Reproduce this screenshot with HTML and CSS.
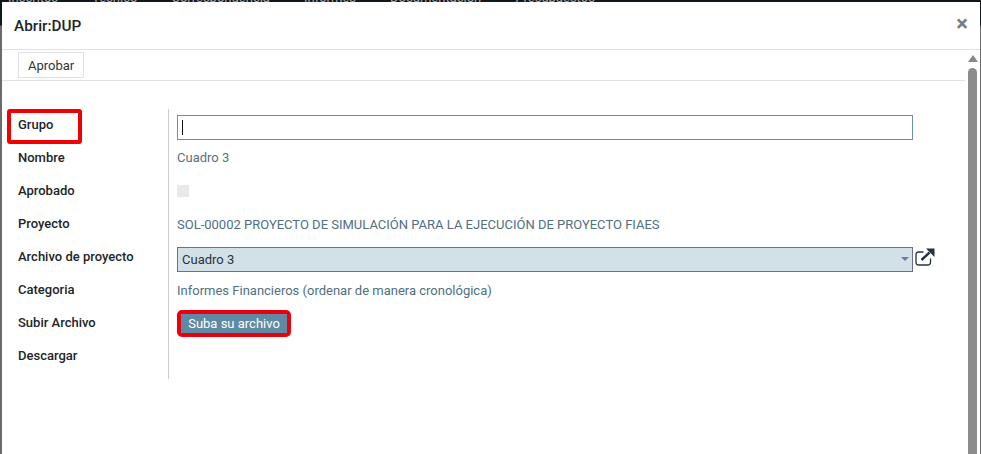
FILE: index.html
```html
<!DOCTYPE html>
<html lang="es">
<head>
<meta charset="utf-8">
<title>Abrir:DUP</title>
<link rel="stylesheet" href="styles.css">
</head>
<body>
<div class="backdrop">
  <div class="backdrop-text"><span>Inscritos</span><span>Técnico</span><span>Correspondencia</span><span>Informes</span><span>Documentación</span><span>Presupuestos</span></div>
  <div class="modal">
    <header class="modal-header">
      <h4 class="modal-title">Abrir:DUP</h4>
      <span class="close">×</span>
    </header>
    <div class="modal-main">
      <div class="modal-content">
        <div class="toolbar"><button class="btn-approve">Aprobar</button></div>
        <div class="form">
          <div class="labels">
            <div class="label label-marked">Grupo</div>
            <div class="label">Nombre</div>
            <div class="label">Aprobado</div>
            <div class="label">Proyecto</div>
            <div class="label">Archivo de proyecto</div>
            <div class="label">Categoria</div>
            <div class="label">Subir Archivo</div>
            <div class="label">Descargar</div>
          </div>
          <div class="values">
            <div class="value value-field"><div class="input"><span class="caret"></span></div></div>
            <div class="value value-text">Cuadro 3</div>
            <div class="value value-check"><span class="checkbox"></span></div>
            <div class="value link">SOL-00002 PROYECTO DE SIMULACIÓN PARA LA EJECUCIÓN DE PROYECTO FIAES</div>
            <div class="value value-field">
              <div class="select"><span>Cuadro 3</span><span class="select-arrow"></span></div>
              <svg class="external" viewBox="0 0 20 18" width="20" height="18" aria-hidden="true">
                <path d="M8.500 4H3.500A2.500 2.500 0 0 0 1 6.500v8A2.500 2.500 0 0 0 3.500 17H13a2.500 2.500 0 0 0 2.500-2.500V10.500" fill="none" stroke="#24323c" stroke-width="1.300"/>
                <path d="M6.500 12L14.500 4.500" fill="none" stroke="#24323c" stroke-width="2.400"/>
                <path d="M11 0.500H19.500V9Z" fill="#24323c"/>
              </svg>
            </div>
            <div class="value link">Informes Financieros (ordenar de manera cronológica)</div>
            <div class="value"><button class="btn-upload">Suba su archivo</button></div>
            <div class="value"></div>
          </div>
        </div>
      </div>
      <div class="scrollbar"><span class="scroll-up"></span><span class="scroll-thumb"></span></div>
    </div>
  </div>
</div>
</body>
</html>
```
FILE: styles.css
```css
*, *::before, *::after { box-sizing: border-box; }
html, body { margin: 0; height: 100%; overflow: hidden; }
body { font-family: Roboto, "Liberation Sans", sans-serif; font-size: 13px; color: #212529; background: #11181d; }
.backdrop { position: relative; height: 454px; padding: 2px 1px 0 2px; background: linear-gradient(to bottom, #11181d 0, #11181d 25px, #6b6b6b 26px, #6b6b6b 100%); }
.backdrop-text { position: absolute; top: -9px; left: 8px; display: flex; gap: 34px; color: #a9adb0; font-size: 13px; line-height: 14px; white-space: nowrap; }
.modal { position: relative; height: 452px; background: #fff; display: flex; flex-direction: column; }
.modal-header { height: 48px; flex: none; display: flex; align-items: center; justify-content: space-between; padding: 0 12px; border-bottom: 1px solid #e2e2e2; }
.modal-title { margin: 0; font-size: 15.300px; font-weight: 500; color: #212529; line-height: 46px; }
.close { font-size: 22px; font-weight: 700; color: #7b7b7b; line-height: 42px; height: 46px; }
.modal-main { flex: 1; min-height: 0; display: flex; }
.modal-content { flex: 1; min-width: 0; }
.toolbar { height: 31px; padding: 2px 0 0 16px; border-bottom: 1px solid #e2e2e2; }
.btn-approve { display: block; height: 26px; padding: 0 9px; border: 1px solid #dee2e6; background: #fff; font: 13px Roboto, sans-serif; color: #333; }
.form { display: flex; padding-top: 28px; }
.labels { width: 150px; margin-left: 16px; }
.label { height: 33px; font-weight: 500; color: #212529; line-height: 32px; }
.label-marked { position: relative; }
.label-marked::after { content: ""; position: absolute; left: -11px; top: 0; width: 75px; height: 35px; border: 4px solid #f00000; border-radius: 3px; }
.values { width: 788px; padding: 0 0 6px 8px; border-left: 1px solid #ccc; }
.value { height: 33px; display: flex; align-items: center; color: #5d6f79; position: relative; }
.value-field { padding-top: 3px; }
.value-text { padding-bottom: 2px; }
.value-check { padding-bottom: 1px; }
.link { color: #4f6f82; }
.input { width: 736px; height: 25px; border: 1px solid #6c919f; background: #fff; display: flex; align-items: center; padding-left: 4px; }
.caret { width: 1px; height: 15px; background: #111; }
.checkbox { width: 12px; height: 12px; background: #e9e9e9; }
.select { width: 736px; height: 25px; border: 1px solid #6d6f96; background: #d2e0e8; color: #2b3338; display: flex; align-items: center; justify-content: space-between; padding: 0 3px 0 4px; }
.select-arrow { width: 0; height: 0; border-left: 4px solid transparent; border-right: 4px solid transparent; border-top: 4px solid #7b74a8; }
.external { margin: -4px 0 0 2px; }
.btn-upload { box-sizing: content-box; width: 106px; height: 19px; padding: 0; border: 0; background: #5f8aa3; color: #fff; font: 400 13px Roboto, sans-serif; outline: 4px solid #e8000f; border-radius: 1px; margin: 0 0 0 4px; }
.scrollbar { width: 15px; padding: 5px 3px 0; flex: none; display: flex; flex-direction: column; align-items: center; gap: 6px; }
.scroll-up { width: 0; height: 0; border-left: 5px solid transparent; border-right: 5px solid transparent; border-bottom: 7px solid #888; }
.scroll-thumb { flex: 1; width: 9px; background: #8c8c8c; border-radius: 5px 5px 0 0; }
```
